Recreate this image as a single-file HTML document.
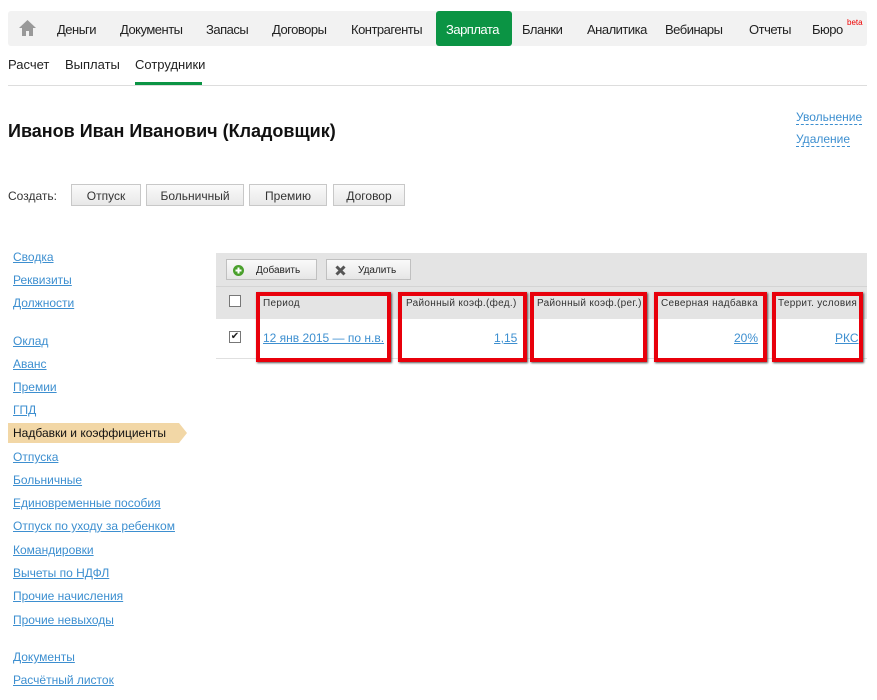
<!DOCTYPE html><html><head><meta charset="utf-8"><style>
body{margin:0;width:877px;height:700px;position:relative;background:#fff;font-family:"Liberation Sans",Arial,sans-serif;color:#222;overflow:hidden}
.a{position:absolute;white-space:nowrap}
.nav{position:absolute;left:8px;top:11px;width:859px;height:35px;background:#f2f2f2;border-radius:3px}
.n{position:absolute;top:22px;font-size:13px;color:#222;letter-spacing:-0.5px}
.btn{position:absolute;top:184px;height:22px;border:1px solid #c8c8c8;background:linear-gradient(#fafafa,#e8e8e8);font-size:12px;color:#333;text-align:center;line-height:22px;box-sizing:border-box}
.sl{position:absolute;left:13px;font-size:12px;color:#3d8fd0;text-decoration:underline}
.rb{position:absolute;border:4px solid #e8000b;box-sizing:border-box;top:292px;height:70px;box-shadow:1px 1px 2px #555}
.h{position:absolute;top:298px;font-size:10px;color:#333;letter-spacing:0.3px}
.v{position:absolute;top:331px;font-size:12px;color:#3d8fd0;text-decoration:underline}
.cb{position:absolute;width:10px;height:10px;border:1px solid #777;background:#fff}
.tb{position:absolute;top:259px;height:21px;border:1px solid #c0c0c0;background:linear-gradient(#fafafa,#e6e6e6);font-size:10px;line-height:21px;box-sizing:border-box}
</style></head><body>
<div class="nav"></div>
<svg class="a" style="left:18px;top:19px" width="19" height="18" viewBox="0 0 19 18"><path d="M9.5 1L1 9h3v8h4v-5h3v5h4V9h3z" fill="#999"/></svg>
<div class="a" style="left:436px;top:11px;width:76px;height:35px;background:#0b9444;border-radius:3px"></div>
<span class="n" style="left:57px">Деньги</span>
<span class="n" style="left:120px">Документы</span>
<span class="n" style="left:206px">Запасы</span>
<span class="n" style="left:272px">Договоры</span>
<span class="n" style="left:351px">Контрагенты</span>
<span class="n" style="left:446px;color:#fff">Зарплата</span>
<span class="n" style="left:522px">Бланки</span>
<span class="n" style="left:587px">Аналитика</span>
<span class="n" style="left:665px">Вебинары</span>
<span class="n" style="left:749px">Отчеты</span>
<span class="n" style="left:812px">Бюро</span>
<span class="a" style="left:847px;top:18px;font-size:8px;color:#e00">beta</span>
<span class="a" style="left:8px;top:57px;font-size:13px">Расчет</span>
<span class="a" style="left:65px;top:57px;font-size:13px">Выплаты</span>
<span class="a" style="left:135px;top:57px;font-size:13px">Сотрудники</span>
<div class="a" style="left:8px;top:85px;width:859px;height:1px;background:#ddd"></div>
<div class="a" style="left:135px;top:82px;width:67px;height:3px;background:#0b9444"></div>
<div class="a" style="left:8px;top:121px;font-size:18px;font-weight:bold;color:#111">Иванов Иван Иванович (Кладовщик)</div>
<span class="a" style="left:796px;top:110px;font-size:12px;color:#3d8fd0;border-bottom:1px dashed #3d8fd0">Увольнение</span>
<span class="a" style="left:796px;top:132px;font-size:12px;color:#3d8fd0;border-bottom:1px dashed #3d8fd0">Удаление</span>
<span class="a" style="left:8px;top:189px;font-size:12px;color:#333">Создать:</span>
<div class="btn" style="left:71px;width:70px">Отпуск</div>
<div class="btn" style="left:146px;width:98px">Больничный</div>
<div class="btn" style="left:249px;width:78px">Премию</div>
<div class="btn" style="left:333px;width:72px">Договор</div>
<span class="sl" style="top:250px">Сводка</span>
<span class="sl" style="top:273px">Реквизиты</span>
<span class="sl" style="top:296px">Должности</span>
<span class="sl" style="top:334px">Оклад</span>
<span class="sl" style="top:357px">Аванс</span>
<span class="sl" style="top:380px">Премии</span>
<span class="sl" style="top:403px">ГПД</span>
<svg class="a" style="left:8px;top:423px" width="179" height="20"><path d="M0 0H171L179 10L171 20H0z" fill="#f2d7a6"/></svg>
<span class="a" style="left:13px;top:426px;font-size:12px;color:#111">Надбавки и коэффициенты</span>
<span class="sl" style="top:450px">Отпуска</span>
<span class="sl" style="top:473px">Больничные</span>
<span class="sl" style="top:496px">Единовременные пособия</span>
<span class="sl" style="top:519px">Отпуск по уходу за ребенком</span>
<span class="sl" style="top:543px">Командировки</span>
<span class="sl" style="top:566px">Вычеты по НДФЛ</span>
<span class="sl" style="top:589px">Прочие начисления</span>
<span class="sl" style="top:613px">Прочие невыходы</span>
<span class="sl" style="top:650px">Документы</span>
<span class="sl" style="top:673px">Расчётный листок</span>
<div class="a" style="left:216px;top:253px;width:651px;height:66px;background:#e4e4e4"></div>
<div class="a" style="left:216px;top:286px;width:651px;height:1px;background:#d4d4d4"></div>
<div class="a" style="left:216px;top:319px;width:651px;height:39px;background:#fff;border-bottom:1px solid #e0e0e0"></div>
<div class="tb" style="left:226px;width:91px"><svg style="position:absolute;left:6px;top:5px" width="11" height="11"><circle cx="5.5" cy="5.5" r="5.5" fill="#4aa02c"/><path d="M5.5 2.5v6M2.5 5.5h6" stroke="#fff" stroke-width="2"/></svg><span style="position:absolute;left:29px">Добавить</span></div>
<div class="tb" style="left:326px;width:85px"><svg style="position:absolute;left:8px;top:5px" width="11" height="11"><path d="M1.5 1.5l8 8M9.5 1.5l-8 8" stroke="#555" stroke-width="3"/></svg><span style="position:absolute;left:31px">Удалить</span></div>
<div class="cb" style="left:229px;top:295px"></div>
<div class="cb" style="left:229px;top:331px;font-size:10px;line-height:10px;text-align:center">✔</div>
<span class="h" style="left:263px">Период</span>
<span class="h" style="left:406px">Районный коэф.(фед.)</span>
<span class="h" style="left:537px">Районный коэф.(рег.)</span>
<span class="h" style="left:661px">Северная надбавка</span>
<span class="h" style="left:778px">Террит. условия</span>
<span class="v" style="left:263px">12 янв 2015 — по н.в.</span>
<span class="v" style="left:494px">1,15</span>
<span class="v" style="left:734px">20%</span>
<span class="v" style="left:835px">РКС</span>
<div class="rb" style="left:256px;width:135px"></div>
<div class="rb" style="left:398px;width:129px"></div>
<div class="rb" style="left:530px;width:117px"></div>
<div class="rb" style="left:654px;width:113px"></div>
<div class="rb" style="left:772px;width:91px"></div>
</body></html>
